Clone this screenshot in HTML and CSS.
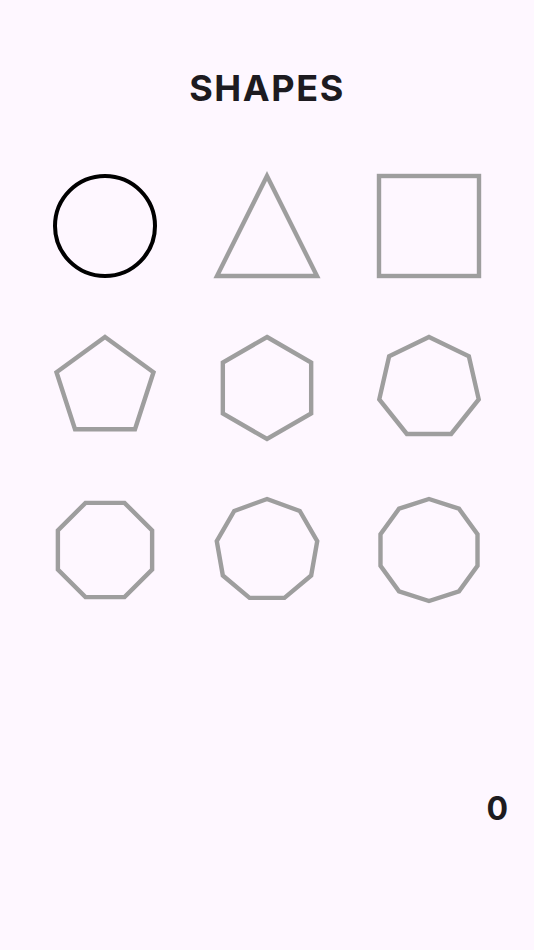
FILE: index.html
```html
<!DOCTYPE html>
<html lang="en">
<head>
<meta charset="utf-8">
<title>Shapes</title>
<link rel="stylesheet" href="styles.css">
</head>
<body>
<main class="screen">
  <h1 class="title">SHAPES</h1>
  <div class="grid">
    <div class="cell"><svg class="shape" viewBox="0 0 162 162"><circle class="selected" cx="81" cy="81" r="50"/></svg></div>
    <div class="cell"><svg class="shape" viewBox="0 0 162 162"><polygon class="outline" points="81,31 131,131 31,131"/></svg></div>
    <div class="cell"><svg class="shape" viewBox="0 0 162 162"><rect class="outline" x="31" y="31" width="100" height="100"/></svg></div>
    <div class="cell"><svg class="shape" viewBox="0 0 162 162"><polygon class="outline" points="81,30 129.51,65.24 110.98,122.26 51.02,122.26 32.49,65.24"/></svg></div>
    <div class="cell"><svg class="shape" viewBox="0 0 162 162"><polygon class="outline" points="81,30 125.17,55.5 125.17,106.5 81,132 36.83,106.5 36.83,55.5"/></svg></div>
    <div class="cell"><svg class="shape" viewBox="0 0 162 162"><polygon class="outline" points="81,30 120.87,49.2 130.72,92.35 103.13,126.95 58.87,126.95 31.28,92.35 41.13,49.2"/></svg></div>
    <div class="cell"><svg class="shape" viewBox="0 0 162 162"><polygon class="outline" points="61.48,33.88 100.52,33.88 128.12,61.48 128.12,100.52 100.52,128.12 61.48,128.12 33.88,100.52 33.88,61.48"/></svg></div>
    <div class="cell"><svg class="shape" viewBox="0 0 162 162"><polygon class="outline" points="81,30 113.78,41.93 131.23,72.15 125.17,106.5 98.44,128.92 63.56,128.92 36.83,106.5 30.77,72.15 48.22,41.93"/></svg></div>
    <div class="cell"><svg class="shape" viewBox="0 0 162 162"><polygon class="outline" points="81,30 110.98,39.74 129.51,65.24 129.51,96.76 110.98,122.26 81,132 51.02,122.26 32.49,96.76 32.49,65.24 51.02,39.74"/></svg></div>
  </div>
  <div class="score">0</div>
</main>
</body>
</html>
```

FILE: styles.css
```css
html, body {
  margin: 0;
  padding: 0;
  background: #fef7ff;
}

.screen {
  width: 534px;
  height: 950px;
  display: flex;
  flex-direction: column;
  font-family: Inter, Roboto, "Noto Sans", sans-serif;
  color: #1d1b20;
}

.title {
  margin: 67px 0 0;
  height: 43px;
  line-height: 43px;
  font-size: 36px;
  font-weight: 700;
  letter-spacing: 1.6px;
  text-align: center;
}

.grid {
  margin-top: 35px;
  padding: 0 24px;
  display: grid;
  grid-template-columns: repeat(3, 162px);
  grid-auto-rows: 162px;
}

.cell {
  display: flex;
}

.shape {
  width: 162px;
  height: 162px;
  display: block;
}

.outline {
  fill: none;
  stroke: #9e9e9e;
  stroke-width: 4.4;
  stroke-linejoin: miter;
}

.selected {
  fill: none;
  stroke: #000000;
  stroke-width: 4;
}

.score {
  margin-top: 159px;
  padding-right: 26px;
  text-align: right;
  font-size: 32px;
  font-weight: 700;
  line-height: 37px;
}
```
